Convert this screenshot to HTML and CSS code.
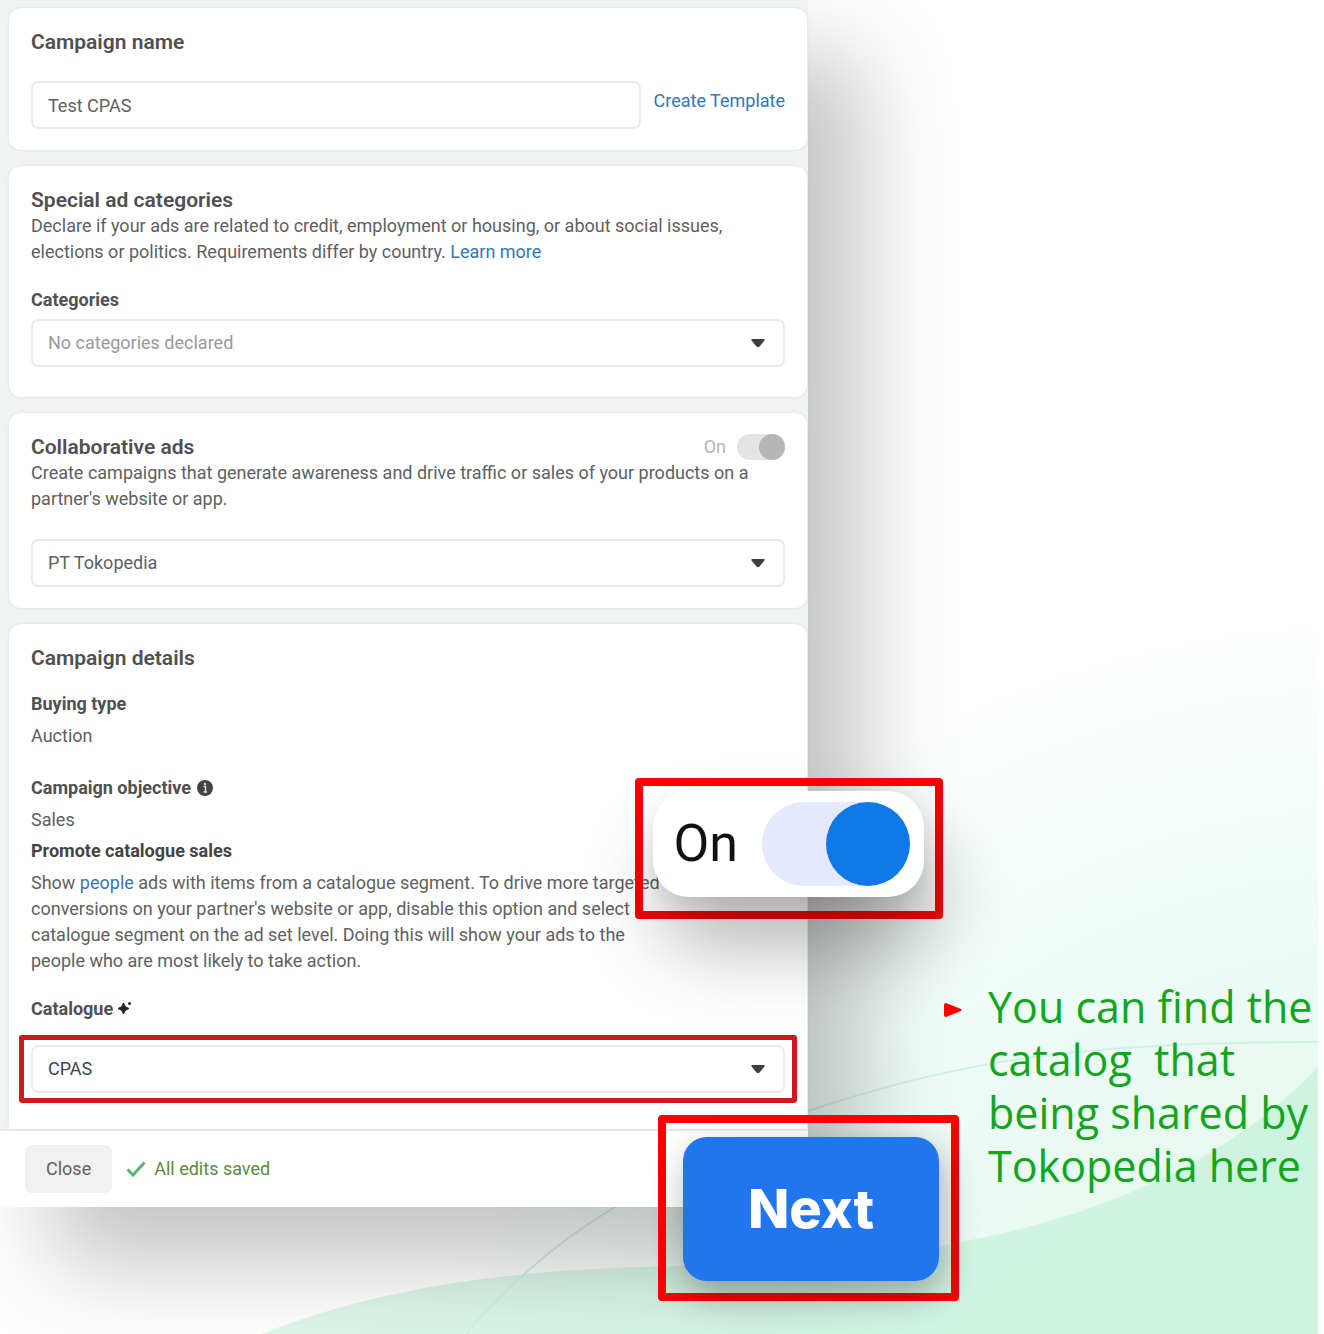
FILE: index.html
```html
<!DOCTYPE html>
<html lang="en">
<head>
<meta charset="utf-8">
<meta name="viewport" content="width=device-width, initial-scale=1">
<title>Campaign setup</title>
<link rel="stylesheet" href="styles.css">
</head>
<body>
<div class="slide">
  <svg class="backdrop" viewBox="0 0 1318 1334" preserveAspectRatio="none" aria-hidden="true">
    <defs>
      <radialGradient id="glow" gradientUnits="userSpaceOnUse" cx="0" cy="0" r="1" gradientTransform="translate(1400 1400) scale(960 800)">
        <stop offset="0" stop-color="#daf5e8"/>
        <stop offset="0.6" stop-color="#eefbf6"/>
        <stop offset="1" stop-color="#ffffff"/>
      </radialGradient>
      <linearGradient id="hill" x1="0" y1="0" x2="1" y2="0.3">
        <stop offset="0" stop-color="#e6faf0"/>
        <stop offset="1" stop-color="#ccf3e0"/>
      </linearGradient>
    </defs>
    <rect width="1318" height="1334" fill="url(#glow)"/>
    <path d="M262 1334C370 1290 500 1271 640 1267C760 1264 850 1262 950 1244C1120 1214 1240 1150 1318 1067V1334Z" fill="url(#hill)"/>
    <path d="M466 1334C510 1282 560 1240 615 1207C680 1168 740 1137 808 1111C960 1060 1080 1042 1318 1042" fill="none" stroke="#d0f3e1" stroke-width="2"/>
  </svg>

  <main class="panel">
    <form class="cards">
      <section class="card">
        <h2><label for="campaign-name">Campaign name</label></h2>
        <div class="name-row">
          <input class="field" id="campaign-name" type="text" value="Test CPAS">
          <a class="template-link" href="#">Create Template</a>
        </div>
      </section>

      <section class="card card-roomy">
        <h2>Special ad categories</h2>
        <p>Declare if your ads are related to credit, employment or housing, or about social issues, elections or politics. Requirements differ by country. <a href="#">Learn more</a></p>
        <label class="label spaced" for="categories">Categories</label>
        <div class="select">
          <select class="field placeholder" id="categories"><option>No categories declared</option></select>
          <svg class="caret" viewBox="0 0 14 9" aria-hidden="true"><path d="M1 0H13Q14 0 13.400 1.500L8.500 7.500Q7 9 5.500 7.500L.6 1.500Q0 0 1 0Z"/></svg>
        </div>
      </section>

      <section class="card">
        <div class="head-row">
          <h2>Collaborative ads</h2>
          <label class="state">On <input class="switch" type="checkbox" checked disabled></label>
        </div>
        <p>Create campaigns that generate awareness and drive traffic or sales of your products on a partner's website or app.</p>
        <div class="select partner">
          <select class="field" aria-label="Partner"><option>PT Tokopedia</option></select>
          <svg class="caret" viewBox="0 0 14 9" aria-hidden="true"><path d="M1 0H13Q14 0 13.400 1.500L8.500 7.500Q7 9 5.500 7.500L.6 1.500Q0 0 1 0Z"/></svg>
        </div>
      </section>

      <section class="card card-last">
        <h2>Campaign details</h2>
        <h3 class="label first">Buying type</h3>
        <p class="value">Auction</p>
        <h3 class="label objective">Campaign objective
          <svg class="info" viewBox="0 0 16 16" aria-hidden="true"><circle cx="8" cy="8" r="8" fill="#444"/><path d="M6.500 6.500H8.500V12M6.500 12H10" fill="none" stroke="#ddd" stroke-width="1.500"/><circle cx="8" cy="4" r="1.200" fill="#ddd"/></svg>
        </h3>
        <p class="value">Sales</p>
        <h3 class="label promote">Promote catalogue sales</h3>
        <p class="value details">Show <a href="#">people</a> ads with items from a catalogue segment. To drive more targeted conversions on your partner's website or app, disable this option and select a catalogue segment on the ad set level. Doing this will show your ads to the people who are most likely to take action.</p>
        <label class="label spaced" for="catalogue">Catalogue
          <svg class="sparkle" viewBox="0 0 14 14" aria-hidden="true"><path d="M5.500 2Q6.500 6.500 11 7.500Q6.500 8.500 5.500 13Q4.500 8.500 0 7.500Q4.500 6.500 5.500 2Z" stroke="#222" stroke-linejoin="round"/><circle cx="11.500" cy="2.500" r="1.500"/></svg>
        </label>
        <div class="marked">
          <div class="select">
            <select class="field dark" id="catalogue"><option>CPAS</option></select>
            <svg class="caret" viewBox="0 0 14 9" aria-hidden="true"><path d="M1 0H13Q14 0 13.400 1.500L8.500 7.500Q7 9 5.500 7.500L.6 1.500Q0 0 1 0Z"/></svg>
          </div>
        </div>
      </section>
    </form>

    <footer class="footer">
      <button class="close" type="button">Close</button>
      <span class="saved">
        <svg class="check" viewBox="0 0 20 16" aria-hidden="true"><path d="M1.500 8.500L7 14L18.500 1.500" fill="none" stroke="#5bb570" stroke-width="3"/></svg>
        All edits saved
      </span>
    </footer>

    <div class="callout callout-switch">
      <label class="switch-card">On <input class="switch switch-large" type="checkbox" checked></label>
    </div>
    <div class="callout callout-next">
      <button class="next" type="button">Next</button>
    </div>
  </main>

  <aside class="note">
    <svg class="pointer" viewBox="0 0 18 14" aria-hidden="true"><path d="M2 0L17 6Q18 7 17 8L2 14Q0 14 0 12V2Q0 0 2 0Z" fill="#f00"/></svg>
    <p class="note-text">You can find the<br>catalog&nbsp; that<br>being shared by<br>Tokopedia here</p>
  </aside>
</div>
</body>
</html>
```
FILE: styles.css
```css
* {
  box-sizing: border-box;
}

body {
  margin: 0;
  background: #fff;
  color: #606060;
  font: 18px/26px Roboto, "Liberation Sans", sans-serif;
}

h2, h3, p {
  margin: 0;
}

h2 {
  color: #505050;
  font-size: 21px;
  font-weight: 600;
  line-height: 26px;
}

a {
  color: #3577ae;
  text-decoration: none;
}

.slide {
  position: relative;
  display: grid;
  grid-template-columns: minmax(0, 808fr) minmax(0, 510fr);
  align-items: start;
  min-height: 100vh;
  margin-right: 6px;
  overflow: hidden;
}

.backdrop {
  position: absolute;
  inset: 0;
  width: 100%;
  height: 100%;
}

.panel {
  position: relative;
  background: #f1f3f3;
  box-shadow: 52px 56px 90px rgba(0, 0, 0, 0.24), inset 0 1px #e4f3fb;
}

.cards {
  display: flex;
  flex-direction: column;
  gap: 16px;
  padding: 8px 1px 0 9px;
}

.card {
  padding: 21px 22px;
  border-radius: 12px;
  background: #fff;
  box-shadow: 0 0 3px rgba(0, 0, 0, 0.1);
}

.card-roomy {
  padding-bottom: 30px;
}

.card-last {
  padding-bottom: 26px;
  border-radius: 12px 12px 0 0;
}

.name-row {
  display: flex;
  gap: 13px;
  margin-top: 26px;
}

.template-link {
  margin-top: 7px;
  white-space: nowrap;
}

.field {
  display: block;
  width: 100%;
  min-width: 0;
  height: 48px;
  padding: 0 15px;
  border: 2px solid #e9ebeb;
  border-radius: 7px;
  appearance: none;
  background: #fff;
  color: #606060;
  font: inherit;
}

.placeholder {
  color: #999;
}

.dark {
  color: #444;
}

.select {
  display: grid;
  align-items: center;
}

.select > * {
  grid-area: 1 / 1;
}

.caret {
  justify-self: end;
  width: 14px;
  height: 9px;
  margin-right: 20px;
  fill: #3c3f3f;
  pointer-events: none;
}

.label {
  display: block;
  color: #505050;
  font-size: 18px;
  font-weight: 700;
  line-height: 26px;
}

.spaced {
  margin: 22px 0 6px;
}

.head-row {
  display: flex;
  justify-content: space-between;
}

.state {
  display: flex;
  align-items: center;
  gap: 11px;
  color: #b4b4b4;
}

.switch {
  position: relative;
  width: 48px;
  height: 26px;
  margin: 0;
  border-radius: 13px;
  appearance: none;
  background: #e4e4e4;
}

.switch::after {
  content: "";
  position: absolute;
  top: 0;
  right: 0;
  height: 100%;
  aspect-ratio: 1;
  border-radius: 50%;
  background: #b6b6b6;
}

.partner {
  margin-top: 27px;
}

.first {
  margin-top: 20px;
}

.value {
  margin-top: 6px;
}

.objective {
  display: flex;
  align-items: center;
  gap: 6px;
  margin-top: 26px;
}

.info {
  width: 16px;
  height: 16px;
}

.promote {
  margin-top: 5px;
  color: #444;
}

.details {
  max-width: 640px;
}

.sparkle {
  width: 14px;
  height: 14px;
  fill: #222;
}

.marked {
  margin: 13px -12px 0;
  padding: 5px 7px;
  border: 5px solid #cf1a1c;
  border-radius: 3px;
}

.footer {
  display: flex;
  align-items: center;
  gap: 14px;
  padding: 14px 25px;
  border-top: 2px solid #ececec;
  background: #fff;
}

.close {
  height: 48px;
  padding: 0 21px;
  border: 0;
  border-radius: 7px;
  background: #f1f1f1;
  color: #606060;
  font: inherit;
}

.saved {
  display: flex;
  align-items: center;
  gap: 8px;
  color: #5a8b3c;
}

.check {
  width: 20px;
  height: 16px;
}

.callout {
  position: absolute;
  border: 8px solid #f80306;
  border-radius: 4px;
}

.callout-switch {
  right: -135px;
  bottom: 288px;
  padding: 5px 11px 14px 10px;
}

.switch-card {
  display: flex;
  align-items: center;
  gap: 24px;
  height: 106px;
  padding: 0 14px 0 21px;
  border-radius: 36px;
  background: #fff;
  box-shadow: 10px 48px 80px rgba(0, 0, 0, 0.3), 0 8px 18px rgba(0, 0, 0, 0.08);
  color: #111;
  font-size: 52px;
  font-weight: 400;
  line-height: 60px;
}

.switch-large {
  width: 148px;
  height: 84px;
  border-radius: 42px;
  background: #e4e9fe;
}

.switch-large::after {
  background: #1178e8;
}

.callout-next {
  right: -151px;
  bottom: -94px;
  padding: 14px 12px 12px 17px;
}

.next {
  width: 256px;
  height: 144px;
  padding: 0;
  border: 0;
  border-radius: 24px;
  background: #2176ee;
  box-shadow: 4px 14px 36px rgba(0, 0, 0, 0.3);
  color: #fff;
  font: 800 54px/60px Inter, "Liberation Sans", sans-serif;
}

.note {
  position: relative;
  display: flex;
  align-self: start;
  gap: 26px;
  margin-top: 980px;
  padding-left: 136px;
}

.pointer {
  flex: none;
  width: 18px;
  height: 14px;
  margin-top: 23px;
}

.note-text {
  color: #14a51e;
  font: 500 43px/53px "Open Sans", "Noto Sans", sans-serif;
  white-space: nowrap;
}
```
